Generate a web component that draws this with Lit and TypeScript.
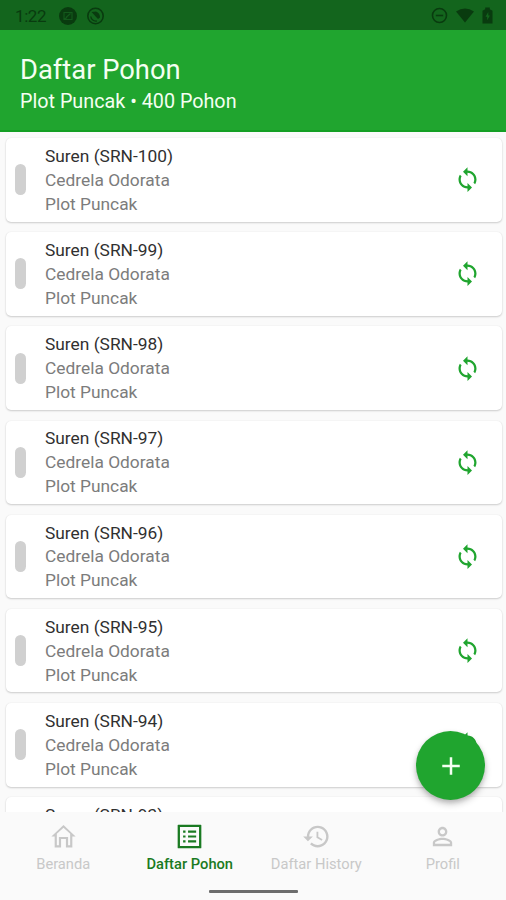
import { LitElement, html, css, svg } from "lit";
import { customElement, property } from "lit/decorators.js";
import { classMap } from "lit/directives/class-map.js";

const paths: Record<string, string> = {
  sync: "M12 4V1L8 5l4 4V6c3.31 0 6 2.69 6 6 0 1.01-.25 1.97-.7 2.8l1.46 1.46C19.54 15.03 20 13.57 20 12c0-4.42-3.58-8-8-8zm0 14c-3.31 0-6-2.69-6-6 0-1.01.25-1.97.7-2.8L5.24 7.74C4.46 8.97 4 10.43 4 12c0 4.42 3.58 8 8 8v3l4-4-4-4v3z",
  home: "M12 4.800l5.500 5V19.300h-1.700v-6.900H8.200v6.900H6.500V9.800L12 4.800M12 2.400L2 12h2.700v9h5.300v-6.900h4V21h5.300v-9H22L12 2.400z",
  list: "M19.900 4.100v15.800H4.100V4.100h15.800m1.400-1.900H2.700c-.3 0-.5.2-.5.5v18.600c0 .3.2.5.5.5h18.600c.3 0 .5-.2.500-.5V2.700c0-.3-.2-.5-.5-.5zM10.800 7h6.700v1.800h-6.700V7zm0 4.100h6.700v1.800h-6.700v-1.800zm0 4.100h6.700V17h-6.700zM6.700 7h2v1.800h-2zm0 4.100h2v1.800h-2zm0 4.100h2V17h-2z",
  history: "M13 3c-4.970 0-9 4.030-9 9H1l3.890 3.890.07.14L9 12H6c0-3.870 3.130-7 7-7s7 3.130 7 7-3.130 7-7 7c-1.930 0-3.680-.79-4.940-2.060l-1.420 1.420C8.270 19.990 10.510 21 13 21c4.970 0 9-4.030 9-9s-4.030-9-9-9zm-1 5v5l4.280 2.540.72-1.210-3.500-2.080V8H12z",
  person: "M12 5.9c1.160 0 2.100.94 2.100 2.100s-.94 2.100-2.100 2.100S9.900 9.160 9.900 8s.94-2.100 2.100-2.100m0 9c2.970 0 6.100 1.460 6.100 2.100v1.100H5.900V17c0-.64 3.130-2.100 6.100-2.100M12 4C9.790 4 8 5.790 8 8s1.790 4 4 4 4-1.790 4-4-1.790-4-4-4zm0 9c-2.670 0-8 1.340-8 4v3h16v-3c0-2.660-5.330-4-8-4z",
  add: "M19 13h-6v6h-2v-6H5v-2h6V5h2v6h6v2z",
};

const icon = (name: string) =>
  html`<svg class="icon" viewBox="0 0 24 24">${svg`<path d=${paths[name]} fill="currentColor"></path>`}</svg>`;

@customElement("status-bar")
class StatusBar extends LitElement {
  static styles = css`
    :host { display: flex; align-items: center; height: 30px; flex: none; box-sizing: border-box;
      padding: 1px 13px 0 15px; background: #13651d; color: #093b0f; }
    .time { font-size: 17px; width: 43px; letter-spacing: -0.4px; }
    .left { display: flex; gap: 8px; flex: 1; }
    .right { display: flex; align-items: center; gap: 8px; }
    svg { display: block; }
  `;
  render() {
    return html`
      <span class="time">1:22</span>
      <div class="left">
        <svg width="20" height="20" viewBox="0 0 20 20">
          <circle cx="10" cy="10" r="9" fill="#093b0f"></circle>
          <path d="M6 6.500h8v7H6zM8 11.500l4.500-4M6 13.500l3-2" fill="none" stroke="#13591c" stroke-width="1.200"></path>
        </svg>
        <svg width="19" height="20" viewBox="0 0 19 20">
          <circle cx="9.500" cy="10" r="7.700" fill="none" stroke="#093b0f" stroke-width="1.600"></circle>
          <path d="M4.800 10.500a5 5 0 0 0 6 4.500" fill="none" stroke="#093b0f" stroke-width="1.300"></path>
          <path d="M5.500 6 10 5.500q4 1.500 4 6l-2 1.500z" fill="#093b0f"></path>
        </svg>
      </div>
      <div class="right">
        <svg width="17" height="17" viewBox="0 0 17 17" fill="none" stroke="#093b0f" stroke-width="1.600">
          <circle cx="8.500" cy="8.500" r="7"></circle><path d="M4.800 8.500h7.400"></path>
        </svg>
        <svg width="18" height="15" viewBox="0 0 18 15"><path d="M0 3.500Q9-2.500 18 3.500L9 14.500z" fill="#093b0f"></path></svg>
        <svg width="11" height="17" viewBox="0 0 11 17">
          <path d="M3.200.5h4.600v1.700l2.700 1.500v12.800H.5V3.700l2.700-1.500z" fill="#093b0f"></path>
          <path d="M6.300 5 3.500 9.700h1.700v3.500l2.700-4.700H6.300z" fill="#13651d"></path>
        </svg>
      </div>`;
  }
}

@customElement("tree-card")
class TreeCard extends LitElement {
  @property() code = "";
  static styles = css`
    :host { display: flex; align-items: center; box-sizing: border-box; height: 83.500px; flex: none;
      padding: 0 20.500px 0 9px; border-radius: 5px; background: #fff;
      box-shadow: 0 1px 2px rgba(0,0,0,.18), 0 0 1.500px rgba(0,0,0,.08); }
    .handle { width: 11px; height: 31px; border-radius: 5.500px; background: #d0d0d0; margin-right: 19px; }
    .text { flex: 1; font-size: 17.350px; line-height: 23.900px; color: #7c7c7c; padding-top: 1.800px; }
    .name { color: #303030; }
    .icon { width: 27px; height: 27px; color: #20a52f; display: block; }
  `;
  render() {
    return html`
      <div class="handle"></div>
      <div class="text">
        <div class="name">Suren (${this.code})</div>
        <div>Cedrela Odorata</div>
        <div>Plot Puncak</div>
      </div>
      ${icon("sync")}`;
  }
}

@customElement("bottom-nav")
class BottomNav extends LitElement {
  static styles = css`
    :host { display: block; flex: none; height: 88px; background: #fafafa; }
    .tabs { display: grid; grid-template-columns: repeat(4, 1fr); height: 77px; }
    .tab { display: flex; flex-direction: column; align-items: center; padding-top: 10px; color: #c8c8c8;
      font-size: 14.700px; line-height: 18px; gap: 3.500px; white-space: nowrap; }
    .active { color: #1a7a22; font-weight: 500; }
    .icon { width: 29px; height: 29px; display: block; }
    .pill { width: 89px; height: 3px; margin: 1px auto 0; background: #6d6d6d; border-radius: 1px; }
  `;
  items = [
    ["home", "Beranda"], ["list", "Daftar Pohon"], ["history", "Daftar History"], ["person", "Profil"],
  ];
  render() {
    return html`
      <div class="tabs">
        ${this.items.map(([name, label], i) => html`
          <div class=${classMap({ tab: true, active: i === 1 })}>${icon(name)}<span>${label}</span></div>`)}
      </div>
      <div class="pill"></div>`;
  }
}

@customElement("app-root")
class AppRoot extends LitElement {
  static styles = css`
    :host { display: flex; flex-direction: column; position: relative; width: 506px; height: 900px;
      overflow: hidden; background: #fafafa; font-family: Roboto, sans-serif; }
    header { flex: none; box-sizing: border-box; height: 102px; padding: 23px 20px 0; background: #20a52f; color: #f4fff2;
      border-bottom: 2px solid #149f24; }
    h1 { margin: 0; font-size: 27.350px; line-height: 34px; font-weight: 400; }
    p { margin: 3px 0 0; font-size: 19.750px; line-height: 24px; }
    main { flex: 1; min-height: 0; overflow: hidden; display: flex; flex-direction: column; gap: 10.700px;
      padding: 6px 4px 0 6px; }
    .fab { position: absolute; left: 416px; top: 731px; width: 69px; height: 69px; border-radius: 50%;
      background: #20a52f; color: #f4fff2; display: grid; place-items: center;
      box-shadow: 0 4px 7px rgba(0,0,0,.22), 0 2px 4px rgba(0,0,0,.12); }
    .fab .icon { width: 30px; height: 30px; }
    tree-card { padding-right: 21.500px; }
  `;
  codes = [100, 99, 98, 97, 96, 95, 94, 93];
  render() {
    return html`
      <status-bar></status-bar>
      <header>
        <h1>Daftar Pohon</h1>
        <p>Plot Puncak • 400 Pohon</p>
      </header>
      <main>${this.codes.map((n) => html`<tree-card code=${`SRN-${n}`}></tree-card>`)}</main>
      <bottom-nav></bottom-nav>
      <div class="fab">${icon("add")}</div>`;
  }
}
